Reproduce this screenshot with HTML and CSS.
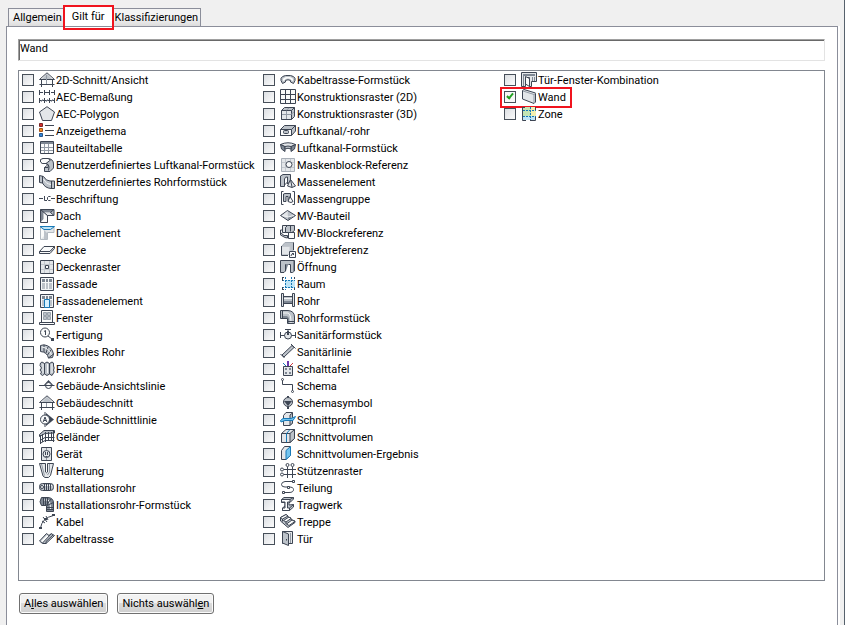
FILE: index.html
```html
<!DOCTYPE html>
<html lang="de">
  <head>
    <meta charset="UTF-8" />
    <meta name="viewport" content="width=device-width, initial-scale=1.0" />
    <title>Gilt für</title>
    <link rel="stylesheet" href="styles.css">
  </head>
  <body>
    <div class="tabs" role="tablist">
      <button class="tab" type="button" role="tab">Allgemein</button>
      <button class="tab active" type="button" role="tab" aria-selected="true">Gilt für</button>
      <button class="tab" type="button" role="tab">Klassifizierungen</button>
    </div>

    <main class="panel">
      <input class="selection" type="text" value="Wand" aria-label="Gilt für" />

      <div class="list">
        <label class="item"><input type="checkbox"><svg class="icon" viewBox="0 0 16 16"><path class="m" stroke="none" d="M2.500 7.500L8 1.500L13.500 7.500Z"/><path class="w" stroke="none" d="M2.500 7.500H13.500V12.500H2.500Z"/><path d="M.5 7.500L8 .8L15.500 7.500H.5M2.500 8V15M13.500 8V15M.5 12.500H15.500"/><path class="thin" d="M7.500 3V12"/></svg>2D-Schnitt/Ansicht</label>
        <label class="item"><input type="checkbox"><svg class="icon" viewBox="0 0 16 16"><path d="M.5 1V6M15.500 1V6M1 3.500H4M12 3.500H15M5.500 1V6M10.500 1V6M6 3.500H10M0 11.500H16M.5 9V14M5.500 9V14M10.500 9V14M15.500 9V14"/><path class="thin" d="M2 13L4 10M7 13L9 10M12 13L14 10"/></svg>AEC-Bemaßung</label>
        <label class="item"><input type="checkbox"><svg class="icon" viewBox="0 0 16 16"><path class="l" d="M8 .7L15.500 6L12.500 14.500H3.500L.5 6Z"/></svg>AEC-Polygon</label>
        <label class="item"><input type="checkbox"><svg class="icon" viewBox="0 0 16 16"><path fill="#d32f2f" stroke="#7c2626" d="M.5 .5h3v3h-3z"/><path fill="#f58a1f" stroke="#a5541a" d="M.5 5.500h3v3h-3z"/><path fill="#3285d6" stroke="#25568c" d="M.5 10.500h3v3h-3z"/><path d="M6 2.500H15M6 7.500H15M6 12.500H15"/></svg>Anzeigethema</label>
        <label class="item"><input type="checkbox"><svg class="icon" viewBox="0 0 16 16"><path class="w" d="M1.500 1.500h13v12h-13z"/><path class="d" d="M2 2h12v2H2z" stroke="none"/><path class="thin" d="M2 7.500H14M2 10.500H14M5.500 4V13M9.500 4V13"/></svg>Bauteiltabelle</label>
        <label class="item"><input type="checkbox"><svg class="icon" viewBox="0 0 16 16"><path class="m" d="M3.500 1.500H9Q14.500 2 14.500 7V11L11 14.500H5.500V10.500H9V8L7 6.500H3Z"/><path class="w" d="M1.500 2.500L4 1.500H9L11.500 3L7 6.500H3.500L1.500 5Z"/><path d="M7 6.500Q10 7 10 10L9.500 13.500M5.500 10.500L8 8.500"/></svg>Benutzerdefiniertes Luftkanal-Formstück</label>
        <label class="item"><input type="checkbox"><svg class="icon" viewBox="0 0 16 16"><path class="m" d="M.5 1.500L4.500 2.500Q7 7 11 7H15.500V14.500H12Q6 14 3.500 9L.5 8.500Z"/><path d="M3.500 2V9M12.500 7V14.500"/><path class="shine" d="M4.500 5Q7 10 12 10.500"/></svg>Benutzerdefiniertes Rohrformstück</label>
        <label class="item"><input type="checkbox"><svg class="icon" viewBox="0 0 16 16"><path d="M0 7.500H4M12 7.500H16M5.500 5V9.500H8M11.500 5.500H9.500L8.500 6.500V8.500L9.500 9.500H11.500"/></svg>Beschriftung</label>
        <label class="item"><input type="checkbox"><svg class="icon" viewBox="0 0 16 16"><path class="m" d="M1.500 1.500H15V7.500H8.500V14.500H1.500Z"/><path class="d" stroke="none" d="M2 2H14.500L12 4.500H5L5 11L2 14Z"/><path class="w" stroke="none" d="M4.500 4.500L8 8V14H2L4.500 11Z"/><path class="l" stroke="none" d="M5 4.500H11L14.500 7H8Z"/><path d="M15 1.500L11.500 4.500L15 7.500M1.500 1.500L8.500 7.500V14.500"/></svg>Dach</label>
        <label class="item"><input type="checkbox"><svg class="icon" viewBox="0 0 16 16"><path class="l" stroke="#b3bac1" d="M1.500 1.500H15V7.500H8.500V14.500H1.500Z"/><path class="w" stroke="none" d="M2 3L5 6V11L2 14Z"/><path class="m" stroke="none" d="M5 5L8 8V14H5Z"/><path fill="#bfe5f7" stroke="#1879b7" d="M1 1.500H15.500L11.500 4.500H5Z"/></svg>Dachelement</label>
        <label class="item"><input type="checkbox"><svg class="icon" viewBox="0 0 16 16"><path class="w" d="M5 4.500H15.500L11 9.500H.5Z"/><path class="w" d="M.5 9.500H11L15.500 4.500V6.500L11 11.500H.5Z"/></svg>Decke</label>
        <label class="item"><input type="checkbox"><svg class="icon" viewBox="0 0 16 16"><path class="l" d="M1.500 1.500h13v13h-13z"/><path class="faint" d="M5.500 2V14M10.500 2V14M2 5.500H14M2 10.500H14"/><path class="w" d="M6.500 6.500h3v3h-3z"/></svg>Deckenraster</label>
        <label class="item"><input type="checkbox"><svg class="icon" viewBox="0 0 16 16"><path class="m" d="M1.500 1.500h13v13h-13z"/><path class="d" stroke="none" d="M3 3h10v3H3z"/><path class="shine" d="M2.500 2.500h11v11h-11zM6.500 3V13M9.500 3V13M3 6.500H13"/></svg>Fassade</label>
        <label class="item"><input type="checkbox"><svg class="icon" viewBox="0 0 16 16"><path class="m" d="M1.500 1.500h13v13h-13z"/><path class="d" stroke="none" d="M3 3h10v3H3z"/><path class="shine" d="M2.500 2.500h11v11h-11zM6.500 3V6M9.500 3V6M3 6.500H13"/><path fill="#d6f1ff" stroke="#1879b7" d="M5.500 6.500h5v8h-5z"/></svg>Fassadenelement</label>
        <label class="item"><input type="checkbox"><svg class="icon" viewBox="0 0 16 16"><path class="w" d="M2.500 .5h11v12h-11zM.5 12.500h15v2H.5z"/><path class="m" stroke="#98a1ab" d="M4.500 2.500h3v3h-3zM8.500 2.500h3v3h-3zM4.500 6.500h3v3h-3zM8.500 6.500h3v3h-3z"/></svg>Fenster</label>
        <label class="item"><input type="checkbox"><svg class="icon" viewBox="0 0 16 16"><circle class="w" cx="6" cy="5.500" r="4.500"/><path d="M6.500 3.500V8M5 4.500L6.500 3.500M9 9L13 12"/><path class="k" d="M12 11h3v3h-3z"/></svg>Fertigung</label>
        <label class="item"><input type="checkbox"><svg class="icon" viewBox="0 0 16 16"><path class="m" d="M1.500 1.500L5 .8Q13 2 14.500 10L13.500 13.500L9.500 14Q8 8 1.500 7.500Z"/><path d="M5 1L5 8M9 3L7 9M12 6L8.500 11M14.500 10L9.500 14"/><path class="shine" d="M3 3Q10 4 12.500 11"/></svg>Flexibles Rohr</label>
        <label class="item"><input type="checkbox"><svg class="icon" viewBox="0 0 16 16"><path class="m" d="M1.500 2L3 1L5.500 2.500V13L3.500 14.500L1.500 13L2.500 11L1 9L2.500 7L1 4.500ZM5.500 2.500L8 1L10.500 2.500V13L8 14.500L5.500 13ZM10.500 2.500L13 1L14.500 2V5L15.200 7L14.500 9L15.200 11L13 14.500L10.500 13Z"/><path class="shine" d="M4 3V12M8.500 3V12M13 3V12"/></svg>Flexrohr</label>
        <label class="item"><input type="checkbox"><svg class="icon" viewBox="0 0 16 16"><path d="M0 7.500H15.500"/><path class="k" d="M5 7L9.500 2L14 7Z"/><circle class="w" cx="9.500" cy="7.500" r="3"/><path d="M6 7.500H13"/></svg>Gebäude-Ansichtslinie</label>
        <label class="item"><input type="checkbox"><svg class="icon" viewBox="0 0 16 16"><path class="m" stroke="none" d="M2.500 7.500L8 1.500L13.500 7.500Z"/><path class="w" stroke="none" d="M2.500 7.500H13.500V12.500H2.500Z"/><path d="M.5 7.500L8 .8L15.500 7.500H.5M2.500 8V15M13.500 8V15M.5 12.500H15.500"/><path class="thin" d="M7.500 8V12"/></svg>Gebäudeschnitt</label>
        <label class="item"><input type="checkbox"><svg class="icon" viewBox="0 0 16 16"><path class="k" d="M7 1L15 7.500L7 14Z"/><circle class="w" cx="6" cy="7.500" r="4.500"/><path d="M4.200 10L6 5L7.800 10M5 8.500H7M6 0V3M6 12V15"/></svg>Gebäude-Schnittlinie</label>
        <label class="item"><input type="checkbox"><svg class="icon" viewBox="0 0 16 16"><path class="m" d="M.5 5.500L5 1.500H15.500V4L6 4.500L.5 7.500Z"/><path d="M1 11.500L6 8.500H15.500M1 14.500L6 11.500H15.500M1.500 6V15M3.500 5V13M6.500 3V13M9.500 3V11M12.500 3V11M14.500 2V13"/></svg>Geländer</label>
        <label class="item"><input type="checkbox"><svg class="icon" viewBox="0 0 16 16"><path class="l" d="M2.500 1.500h10v13h-10z"/><circle cx="7.500" cy="8" r="3.500"/><path d="M6.500 6V9M8.500 6V9M6.500 10.500H8.500M7.500 2.500V3.500M7.500 12.500V13.500"/></svg>Gerät</label>
        <label class="item"><input type="checkbox"><svg class="icon" viewBox="0 0 16 16"><path class="l" d="M.5 .5H6.500V9Q7.500 10.500 8.500 9V.5H14.500L11.500 12.500L9.500 14.500H6L4 13Z"/><path class="thin" d="M2.500 1L5.500 12.500M10.500 1V9L8.500 12"/></svg>Halterung</label>
        <label class="item"><input type="checkbox"><svg class="icon" viewBox="0 0 16 16"><rect class="m" x=".5" y="3.500" width="14" height="7" rx="3"/><path class="shine" d="M3 5.500H13"/><path d="M5.500 4V10M7.500 4V10M9.500 4V10M11.500 4V10"/><circle class="w" cx="3" cy="7" r="1.500"/></svg>Installationsrohr</label>
        <label class="item"><input type="checkbox"><svg class="icon" viewBox="0 0 16 16"><path class="d" d="M2.500 .5H9Q14.500 1 14.500 6V14.500H7.500V8.500H2.500Q-.5 5 2.500 .5Z"/><path class="shine" d="M4 3H9Q11.500 4 11.500 13"/><path d="M4.500 1V8M6.500 1V8M8.500 1V8M7.500 8L12 2M8 8.500L14.500 5.500M7.500 10.500H14.500M7.500 12.500H14.500"/></svg>Installationsrohr-Formstück</label>
        <label class="item"><input type="checkbox"><svg class="icon" viewBox="0 0 16 16"><path d="M1.500 14Q3 4 14.500 1.500M4 3L8 8M7 2L9 6M3 7L6 9"/><path class="k" d="M0 13h3v2H0zM13 0h3v2h-3zM5 4h3v2H5z"/></svg>Kabel</label>
        <label class="item"><input type="checkbox"><svg class="icon" viewBox="0 0 16 16"><path class="m" d="M.5 10L7.500 2.500L10 4.500L12 2.500L15.500 4.500L7 12.500H3.500Z"/><path class="w" stroke="none" d="M2 10L8 4L10 5.500L4 11.500Z"/><path d="M3.500 12L12 3M7 12.500V10.500L14 4"/></svg>Kabeltrasse</label>

        <label class="item"><input type="checkbox"><svg class="icon" viewBox="0 0 16 16"><path class="m" d="M2.500 11.500Q-2 5 5.500 3.500H10.500Q18 5 13.500 11.500L10.500 10V8.500Q8 7 5.500 8.500V10Z"/><path class="w" stroke="none" d="M3 9Q2 6 6 5H10Q14 6 13 9L11.500 8.500Q11 6.500 8 6.500Q5 6.500 4.500 8.500Z"/></svg>Kabeltrasse-Formstück</label>
        <label class="item"><input type="checkbox"><svg class="icon" viewBox="0 0 16 16"><path class="w" d="M.5 .5h15v14H.5z"/><path d="M5.500 0V15M10.500 0V15M0 5.500H16M0 10.500H16"/></svg>Konstruktionsraster (2D)</label>
        <label class="item"><input type="checkbox"><svg class="icon" viewBox="0 0 16 16"><path class="m" d="M1.500 4.500L4.500 1.500H14.500V10.500L11.500 13.500H1.500Z"/><path class="l" d="M1.500 4.500h10v9h-10z"/><path d="M11.500 4.500L14.500 1.500"/><path class="thin" d="M6.500 5V13M2 8.500H11L14 6M6.500 4L9 2"/></svg>Konstruktionsraster (3D)</label>
        <label class="item"><input type="checkbox"><svg class="icon" viewBox="0 0 16 16"><path class="m" d="M.5 6.500L4.500 2.500H15.500V8L11.500 12.500H.5Z"/><path class="w" d="M.5 6.500h11v6H.5z"/><path d="M11.500 6.500L15.500 2.500"/><rect class="m" x="3.500" y="7.500" width="5" height="3" rx="1"/></svg>Luftkanal/-rohr</label>
        <label class="item"><input type="checkbox"><svg class="icon" viewBox="0 0 16 16"><path class="l" d="M.5 4.500Q8 1 15.500 4.500L11 7H5Z"/><path class="d" d="M.5 4.500L5 6.500V11.500L1.500 9ZM15.500 4.500L11 6.500V11.500L14.500 9Z"/><path class="m" d="M5 6.500Q8 5.500 11 6.500V9Q8 7.500 5 9Z"/></svg>Luftkanal-Formstück</label>
        <label class="item"><input type="checkbox"><svg class="icon" viewBox="0 0 16 16"><path class="l" stroke="#a9b0b9" d="M1.500 1.500h13v13h-13z"/><path class="faint" d="M5.500 2V14M10.500 2V14M2 5.500H14M2 10.500H14"/><circle class="w" cx="9" cy="7.500" r="3"/></svg>Maskenblock-Referenz</label>
        <label class="item"><input type="checkbox"><svg class="icon" viewBox="0 0 16 16"><path class="m" d="M.5 2L3 .5H10.500V7L7.500 10V5.500H4.500V12.500H.5Z"/><path class="w" d="M4.500 5Q5 2.500 7.500 3V8L4.500 11Z"/><path class="l" d="M10.500 5.500L15.500 12L12 13.500L7.500 12Z"/><path d="M10.500 5.500L12 13"/></svg>Massenelement</label>
        <label class="item"><input type="checkbox"><svg class="icon" viewBox="0 0 16 16"><path d="M3.500 .5H1.500V13.500H3.500M12.500 .5H14.500V13.500H12.500"/><path class="m" d="M3.500 3L5 2.500H10.500V7L8 9.500V5.500H6V10.500H3.500Z"/><path class="w" d="M10 5.500L13 10.500L11 11.500L8 10.500Z"/></svg>Massengruppe</label>
        <label class="item"><input type="checkbox"><svg class="icon" viewBox="0 0 16 16"><path class="m" d="M.5 7.500L7.500 2.500L15.500 7.500L8 12.500Z"/><path class="l" stroke="none" d="M2 7.500L7.500 3L8 9Z"/><path class="d" stroke="none" d="M8 9L14.500 7.500L8 12Z"/><path class="shine" d="M2 7.500L8 9L14 7.500"/></svg>MV-Bauteil</label>
        <label class="item"><input type="checkbox"><svg class="icon" viewBox="0 0 16 16"><path class="m" d="M.5 7.500L4 10.500H7.500V13L5 12.500L.5 10Z"/><path class="l" d="M2.500 .5H9.500V7.500H2.500Z"/><path class="m" d="M5.500 2.500L7.500 .5H14.500V5.500L12 7.500H5.500Z"/><path class="w" d="M8.500 7.500h6v6h-6z"/><path d="M10.500 .5V6.500M.5 5V10M2.500 5H.5"/></svg>MV-Blockreferenz</label>
        <label class="item"><input type="checkbox"><svg class="icon" viewBox="0 0 16 16"><path class="m" d="M1.500 4.500L5 .5H13.500V8L9.500 12.500H1.500Z" stroke="#a3abb3"/><path class="l" d="M1.500 4.500H10V12.500H1.500Z" stroke="#c3c8ce"/><path d="M1.500 4V13.500H8M13.500 .5V8"/><path class="w" d="M9.500 9.500h6v6h-6z"/><path d="M11 14Q11 12 13.500 11.500M12 11.500H13.500V13"/></svg>Objektreferenz</label>
        <label class="item"><input type="checkbox"><svg class="icon" viewBox="0 0 16 16"><path class="m" d="M.5 1.500H14.500V12L12.500 13.500H10.500V5.500H5.500V12L4 13.500H.5Z"/><path class="d" stroke="none" d="M6 5H9V6H8L6 12ZM13 2H14V12L13 13Z"/></svg>Öffnung</label>
        <label class="item"><input type="checkbox"><svg class="icon" viewBox="0 0 16 16"><path fill="#bfe5f7" stroke="none" d="M5 4h10v8H5z"/><path stroke="#1879b7" stroke-dasharray="2 1" d="M2 4.500H15M2 11.500H15M5.500 1V14M11.500 1V14"/><path d="M2.500 1V5M2.500 11V14M2 1.500H4M2 13.500H4M14.500 1V3M14.500 12V14"/></svg>Raum</label>
        <label class="item"><input type="checkbox"><svg class="icon" viewBox="0 0 16 16"><path class="m" d="M3 3.500H13V10.500H3Z"/><path class="d" stroke="none" d="M3 8H13V10H3Z"/><path class="shine" d="M3 5.500H13"/><path class="l" d="M1.500 .5h2v13h-2zM12.500 .5h2v13h-2z"/></svg>Rohr</label>
        <label class="item"><input type="checkbox"><svg class="icon" viewBox="0 0 16 16"><path class="m" d="M.5 .5H8Q14.500 1 14.500 7V13.500H7.500V8.500H.5Z"/><path class="shine" d="M3 3H8Q11 4 11 13"/><path class="d" stroke="none" d="M3 6H7L9 8V13H8V8H3Z"/><path d="M2.500 .5V8.500M7.500 11.500H14.500"/></svg>Rohrformstück</label>
        <label class="item"><input type="checkbox"><svg class="icon" viewBox="0 0 16 16"><path d="M.5 5V11M15.500 5V11M1 8.500H5M11 8.500H15M8 2V8M5 2.500H11"/><circle class="l" cx="8" cy="8.500" r="3.500"/><path class="k" d="M7 4h2v4H7z"/></svg>Sanitärformstück</label>
        <label class="item"><input type="checkbox"><svg class="icon" viewBox="0 0 16 16"><path class="m" d="M2 11L12 1.500L14 3.500L4 13Z"/><path d="M.5 10L4.500 14M11 0L15.500 4.500"/></svg>Sanitärlinie</label>
        <label class="item"><input type="checkbox"><svg class="icon" viewBox="0 0 16 16"><path class="l" d="M3.500 5.500h9v9h-9z"/><path class="d" stroke="none" d="M5 7h2v2H5zM9 7h2v2H9zM5 11h2v2H5zM9 11h2v2H9z"/><path stroke="#1879b7" d="M3 2L6 5"/><path stroke="#6a38ad" stroke-width="2" d="M8 0V5"/><path stroke="#d33d43" d="M13 2L10 5"/></svg>Schalttafel</label>
        <label class="item"><input type="checkbox"><svg class="icon" viewBox="0 0 16 16"><path d="M2.500 2V6.500H12.500V13"/><circle class="w" cx="2.500" cy="1.500" r="1"/><circle class="w" cx="12.500" cy="13.500" r="1"/></svg>Schema</label>
        <label class="item"><input type="checkbox"><svg class="icon" viewBox="0 0 16 16"><path d="M8 1V14"/><circle class="m" cx="8" cy="7" r="4.500"/><path class="k" d="M4 6H12L8 11Z"/><path class="k" d="M7 1h2v1H7zM7 12h2v2H7z"/></svg>Schemasymbol</label>
        <label class="item"><input type="checkbox"><svg class="icon" viewBox="0 0 16 16"><path class="l" d="M3.500 3.500L6 .5H12.500V11L10 13.500H3.500Z"/><path class="m" d="M10 3V13.500L12.500 11V1Z"/><path fill="#72c4ef" stroke="#1879b7" d="M.5 8.500L3 6.500H11L15.500 4.500L13 8.500H5L1 10Z"/></svg>Schnittprofil</label>
        <label class="item"><input type="checkbox"><svg class="icon" viewBox="0 0 16 16"><path class="l" d="M1.500 4.500L6 .5H14.500V9.500L10 13.500H1.500Z"/><path class="m" d="M10 4.500L14.500 .5V9.500L10 13.500Z"/><path d="M1.500 4.500H10"/><path stroke="#1879b7" d="M10 .5L6.500 4.500V13"/></svg>Schnittvolumen</label>
        <label class="item"><input type="checkbox"><svg class="icon" viewBox="0 0 16 16"><path class="l" d="M1.500 4.500L4.500 .5H10V9.500L6 13.500H1.500Z"/><path fill="#72c4ef" stroke="#1879b7" d="M6 4.500L10.500 .5V9.500L6 13.500Z"/></svg>Schnittvolumen-Ergebnis</label>
        <label class="item"><input type="checkbox"><svg class="icon" viewBox="0 0 16 16"><path d="M4 6.500H16M4 11.500H16M7.500 4V15M12.500 4V15"/><circle class="w" cx="7.500" cy="2" r="1.500"/><circle class="w" cx="12.500" cy="2" r="1.500"/><circle class="w" cx="2" cy="6.500" r="1.500"/><circle class="w" cx="2" cy="11.500" r="1.500"/></svg>Stützenraster</label>
        <label class="item"><input type="checkbox"><svg class="icon" viewBox="0 0 16 16"><path d="M14 1.500H5Q1.500 2 1.500 4.500Q1.500 7 5 7H9Q13.500 7 13.500 9.500Q13.500 12.500 9 12.500H4"/><path class="w" d="M12.500 .5h2v2h-2zM7.500 6.500h2v2h-2zM2.500 11.500h2v2h-2z"/></svg>Teilung</label>
        <label class="item"><input type="checkbox"><svg class="icon" viewBox="0 0 16 16"><path class="m" d="M1.500 2.500L4 .5H13.500V2L10 5.500H9V8L13.500 7.500V10L9.500 13.500H2.500V11L5 9V5.500H1.500Z"/><path class="w" d="M1.500 2.500H10V5H7.500V11H9.500V13.500H2.500V11H5V5H1.500Z"/><path d="M10 2.500L13.500 .5M9.500 11L13.500 7.500"/></svg>Tragwerk</label>
        <label class="item"><input type="checkbox"><svg class="icon" viewBox="0 0 16 16"><path class="m" d="M.5 3.500L6 .5L8 2V3L11 4V5.500L15 7V8.500L8 13.500L.5 7Z"/><path class="w" d="M.5 3.500L6 .5L8 2L2.500 5ZM3.500 6.500L9 3L11 4.500L6 8ZM6.500 10L12 6L15 7.500L9 11.500Z"/><path d="M2.500 5V7.500M6 8V10"/></svg>Treppe</label>
        <label class="item"><input type="checkbox"><svg class="icon" viewBox="0 0 16 16"><path class="l" d="M2.500 .5H12.500V12.500H2.500Z"/><path class="m" d="M2.500 .5L8.500 3V14.500L2.500 12Z"/><path d="M6.500 8V9.500"/><path class="thin" d="M10.500 2V12"/></svg>Tür</label>

        <label class="item"><input type="checkbox"><svg class="icon" viewBox="0 0 16 16"><path class="l" d="M.5 .5H15.500V9.500H10.500V14.500H8.500V5.500H4.500V14.500H.5Z"/><path class="d" stroke="none" d="M2 2H14V4H3V14H2ZM11 5h1v4h-1zM13 5h1v4h-1z"/><path class="w" d="M4.500 4.500L8.500 6.500V14.500L4.500 12Z"/></svg>Tür-Fenster-Kombination</label>
        <label class="item marked"><input type="checkbox" checked><svg class="icon" viewBox="0 0 16 16"><path class="l" d="M1.500 1.500L3 .5L14.500 4V13L13 14.500L1.500 10Z"/><path class="thin" d="M2 2L13 5.500V14M13 5.500L14.500 4.500"/></svg>Wand</label>
        <label class="item"><input type="checkbox"><svg class="icon" viewBox="0 0 16 16"><path fill="#c3e5b4" stroke="none" d="M2 1h8v9H2z"/><path fill="#f2efb0" stroke="none" d="M10 1h5v9h-5z"/><path fill="#bfe5f7" stroke="none" d="M2 10h13v4H2z"/><path stroke="#1879b7" stroke-dasharray="2 1" d="M2 4.500H15M2 10.500H15M9.500 1V14"/><path d="M1.500 1V14.500H5M14.500 1V4M14.500 11V14.500H9M1 1.500H4"/></svg>Zone</label>
      </div>

      <div class="actions">
        <button class="btn" type="button">A<u>l</u>les auswählen</button>
        <button class="btn" type="button">Nichts auswähl<u>e</u>n</button>
      </div>
    </main>
  </body>
</html>
```
FILE: styles.css
```css
*,
*::before,
*::after {
  box-sizing: border-box;
}

body {
  display: flex;
  flex-direction: column;
  min-height: 100vh;
  margin: 0;
  padding: 6px 6px 0;
  border-right: 1px solid #56616c;
  background: #f0f0f0;
  color: #000;
  font-family: Tahoma, Roboto, "Noto Sans", sans-serif;
  font-size: 11px;
  line-height: 17px;
}

button,
input {
  font: inherit;
  color: inherit;
}

/* tabs */
.tabs {
  display: flex;
  align-items: flex-end;
  height: 20px;
  padding-left: 2px;
}

.tab {
  height: 18px;
  margin: 0;
  padding: 0 2px;
  border: 1px solid #8b8e9a;
  border-bottom: 0;
  background: linear-gradient(#f3f3f3 50%, #dcdcdc);
  white-space: nowrap;
}

.tab:first-child {
  padding-left: 4px;
  border-right: 0;
}

.tab:last-child {
  border-left: 0;
}

.tab.active {
  position: relative;
  z-index: 1;
  height: 20px;
  padding: 0 7px;
  background: #fff;
}

.tab.active::after {
  content: "";
  position: absolute;
  inset: -2px -2px -4px;
  border: 2px solid #f0141e;
}

/* panel */
.panel {
  display: flex;
  flex: 1;
  flex-direction: column;
  padding: 12px 12px 11px 11px;
  border: 1px solid #8b8e9a;
  border-bottom: 0;
  background: #fff;
  box-shadow: 2px 0 #fff;
}

.selection {
  width: 100%;
  height: 22px;
  margin-bottom: 9px;
  padding: 0 1px 4px;
  border: 1px solid #a0a0a0;
  border-right-color: #e3e3e3;
  border-bottom-color: #e3e3e3;
  border-radius: 0;
  outline: 0;
  background: #fff;
  box-shadow: inset 1px 1px #696969;
}

.list {
  display: grid;
  flex: 1;
  grid-template-rows: repeat(28, 17px);
  grid-auto-columns: 241px;
  grid-auto-flow: column;
  padding: 0 3px;
  border: 1px solid #828790;
  overflow-x: auto;
}

.item {
  position: relative;
  display: flex;
  align-items: flex-start;
  line-height: 19px;
  white-space: nowrap;
}

.item input {
  flex: none;
  width: 12px;
  height: 12px;
  margin: 3px 5px 0 0;
  border: 1px solid #474f59;
  background: linear-gradient(135deg, #dcdfe3, #fbfbfb);
  appearance: none;
}

.item input:checked {
  background: #f8f8f8;
}

.item input:checked::after {
  content: "";
  display: block;
  width: 4px;
  height: 7px;
  margin: 0 0 0 3px;
  border: solid #21a121;
  border-width: 0 2px 2px 0;
  transform: rotate(40deg);
}

.item.marked::after {
  content: "";
  position: absolute;
  top: -1px;
  left: -4px;
  width: 72px;
  height: 21px;
  border: 2px solid #f0141e;
}

/* icons */
.icon {
  flex: none;
  width: 16px;
  height: 16px;
  margin: 1px 1px 0 0;
  fill: none;
  stroke: #3d4553;
}

.icon .w {
  fill: #fafbfb;
}

.icon .l {
  fill: #e3e6e9;
}

.icon .m {
  fill: #bcc2c9;
}

.icon .d {
  fill: #7e8793;
}

.icon .k {
  fill: #3d4553;
  stroke: none;
}

.icon .thin {
  stroke: #929aa5;
}

.icon .faint {
  stroke: #c3c8ce;
}

.icon .shine {
  stroke: #f4f6f7;
}

/* buttons */
.actions {
  display: flex;
  gap: 9px;
  margin-top: 12px;
  padding-left: 1px;
}

.btn {
  height: 21px;
  margin: 0;
  padding: 0 4px;
  border: 1px solid #707070;
  border-radius: 3px;
  background: linear-gradient(#f2f2f2 50%, #dcdcdc 50%, #cfcfcf);
  box-shadow: inset 0 0 0 1px #fbfbfb;
  white-space: nowrap;
}
```
